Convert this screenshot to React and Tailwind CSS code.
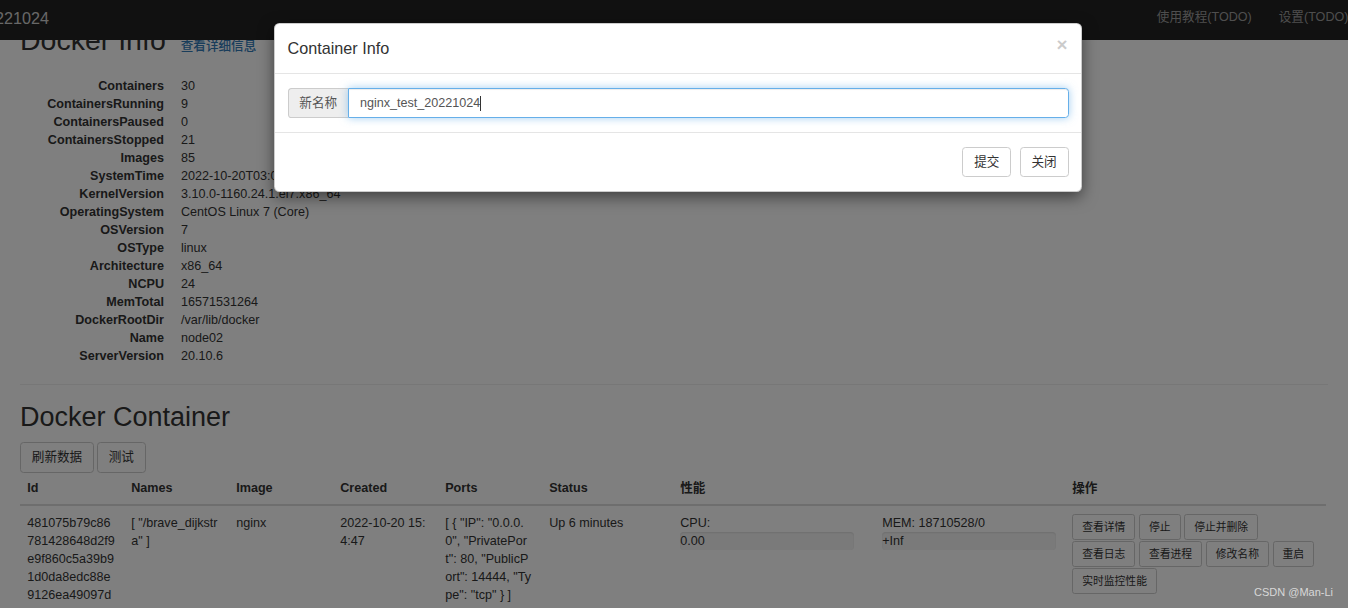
const info = [
  ['Containers', '30'],
  ['ContainersRunning', '9'],
  ['ContainersPaused', '0'],
  ['ContainersStopped', '21'],
  ['Images', '85'],
  ['SystemTime', '2022-10-20T03:09:24.483716361+08:00'],
  ['KernelVersion', '3.10.0-1160.24.1.el7.x86_64'],
  ['OperatingSystem', 'CentOS Linux 7 (Core)'],
  ['OSVersion', '7'],
  ['OSType', 'linux'],
  ['Architecture', 'x86_64'],
  ['NCPU', '24'],
  ['MemTotal', '16571531264'],
  ['DockerRootDir', '/var/lib/docker'],
  ['Name', 'node02'],
  ['ServerVersion', '20.10.6'],
]

const actions = ['查看详情', '停止', '停止并删除', '查看日志', '查看进程', '修改名称', '重启', '实时监控性能']

function Btn({ children, small }) {
  return small ? (
    <button className="h-[26px] px-[9px] text-[10.8px] leading-[16px] text-[#333] bg-white border border-[#ccc] rounded-[2.7px]">
      {children}
    </button>
  ) : (
    <button className="h-[30.6px] px-[10.8px] text-[12.6px] leading-[18px] text-[#333] bg-white border border-[#ccc] rounded-[3.6px]">
      {children}
    </button>
  )
}

function Bar({ label }) {
  return (
    <div className="w-[174px] h-[18px] bg-[#f5f5f5] rounded-[3.6px] shadow-[inset_0_1px_2px_rgba(0,0,0,0.1)] leading-[18px]">
      {label}
    </div>
  )
}

export default function App() {
  return (
    <div
      className="relative h-[608px] w-[1348px] overflow-hidden bg-white text-[#333] text-[12.6px] leading-[18px]"
      style={{ fontFamily: '"Liberation Sans", "Noto Sans CJK SC", sans-serif' }}
    >
      {/* fixed navbar */}
      <nav className="absolute top-0 inset-x-0 z-10 h-[40px] bg-[#222] flex">
        <div className="-ml-[23px] pt-[9px] text-[16.2px] leading-[18px] text-[#d0d0d0]">20221024</div>
        <ul className="ml-auto -mr-[14px] flex pt-[8px] text-[#9d9d9d]">
          <li className="px-[13.5px]">使用教程(TODO)</li>
          <li className="px-[13.5px]">设置(TODO)</li>
        </ul>
      </nav>

      <div className="px-[20px] pt-[25px]">
        <h1 className="text-[28.5px] leading-[1.1] font-medium flex items-baseline gap-[15px]">
          Docker Info
          <a className="text-[12.6px] text-[#337ab7]">查看详细信息</a>
        </h1>

        <dl className="mt-[21px] grid grid-cols-[144px_1fr] gap-x-[17px]">
          {info.map(([k, v]) => (
            <div key={k} className="contents">
              <dt className="font-bold text-right whitespace-nowrap">{k}</dt>
              <dd className="whitespace-nowrap">{v}</dd>
            </div>
          ))}
        </dl>

        <hr className="mt-[19px] border-t border-[#eee]" />

        <h2 className="mt-[18px] text-[27px] leading-[1.1] font-medium">Docker Container</h2>

        <div className="mt-[9px] flex gap-[3px]">
          <Btn>刷新数据</Btn>
          <Btn>测试</Btn>
        </div>

        <table className="w-[1306px] table-fixed border-collapse mt-[-0.6px]">
          <colgroup>
            <col className="w-[104px]" />
            <col className="w-[105px]" />
            <col className="w-[104px]" />
            <col className="w-[105px]" />
            <col className="w-[104px]" />
            <col className="w-[131px]" />
            <col className="w-[202px]" />
            <col className="w-[190px]" />
            <col className="w-[261px]" />
          </colgroup>
          <thead>
            <tr className="text-left">
              {['Id', 'Names', 'Image', 'Created', 'Ports', 'Status'].map((h) => (
                <th key={h} className="p-[7.2px] font-bold border-b-2 border-[#ddd]">{h}</th>
              ))}
              <th colSpan={2} className="p-[7.2px] font-bold border-b-2 border-[#ddd]">性能</th>
              <th className="p-[7.2px] font-bold border-b-2 border-[#ddd]">操作</th>
            </tr>
          </thead>
          <tbody>
            <tr className="align-top">
              <td className="p-[7.2px] break-all">481075b79c86781428648d2f9e9f860c5a39b91d0da8edc88e9126ea49097d60</td>
              <td className="p-[7.2px] break-all">[ "/brave_dijkstra" ]</td>
              <td className="p-[7.2px] break-all">nginx</td>
              <td className="p-[7.2px] break-all">2022-10-20 15:4:47</td>
              <td className="p-[7.2px] break-all">[ {'{'} "IP": "0.0.0.0", "PrivatePort": 80, "PublicPort": 14444, "Type": "tcp" {'}'} ]</td>
              <td className="p-[7.2px]">Up 6 minutes</td>
              <td className="p-[7.2px]">
                <div>CPU:</div>
                <Bar label="0.00" />
              </td>
              <td className="p-[7.2px]">
                <div>MEM: 18710528/0</div>
                <Bar label="+Inf" />
              </td>
              <td className="p-[7.2px]">
                <div className="flex flex-wrap gap-x-[3.6px] gap-y-px">
                  {actions.map((a) => (
                    <Btn key={a} small>{a}</Btn>
                  ))}
                </div>
              </td>
            </tr>
          </tbody>
        </table>
      </div>

      {/* modal backdrop + dialog */}
      <div className="absolute inset-0 z-20 bg-black/50">
        <div className="ml-[274px] mt-[23px] w-[808px] bg-white border border-black/20 rounded-[5.4px] shadow-[0_5px_15px_rgba(0,0,0,0.5)]">
          <div className="flex items-start justify-between px-[12.5px] pt-[12.5px] pb-[13.5px] border-b border-[#e5e5e5]">
            <h4 className="text-[16.2px] leading-[23.1px]">Container Info</h4>
            <span className="mt-[-1px] mr-px text-[18.9px] font-bold leading-none text-black opacity-20">×</span>
          </div>
          <div className="px-[12.5px] py-[14px]">
            <div className="flex h-[30px]">
              <span className="flex items-center px-[10.8px] bg-[#eee] border border-r-0 border-[#ccc] rounded-l-[3.6px] text-[#555]">
                新名称
              </span>
              <div className="flex-1 flex items-center px-[11px] border border-[#66afe9] rounded-r-[3.6px] text-[#555] shadow-[inset_0_1px_1px_rgba(0,0,0,0.075),0_0_8px_rgba(102,175,233,0.6)]">
                nginx_test_20221024
                <span className="w-px h-[15px] bg-[#333]" />
              </div>
            </div>
          </div>
          <div className="flex justify-end gap-[8.6px] px-[12.5px] py-[13.5px] border-t border-[#e5e5e5]">
            <Btn>提交</Btn>
            <Btn>关闭</Btn>
          </div>
        </div>
      </div>

      <div className="absolute right-[15px] bottom-[9px] z-30 text-[11px] leading-[14px] text-[#d8d8d8]">CSDN @Man-Li</div>
    </div>
  )
}
